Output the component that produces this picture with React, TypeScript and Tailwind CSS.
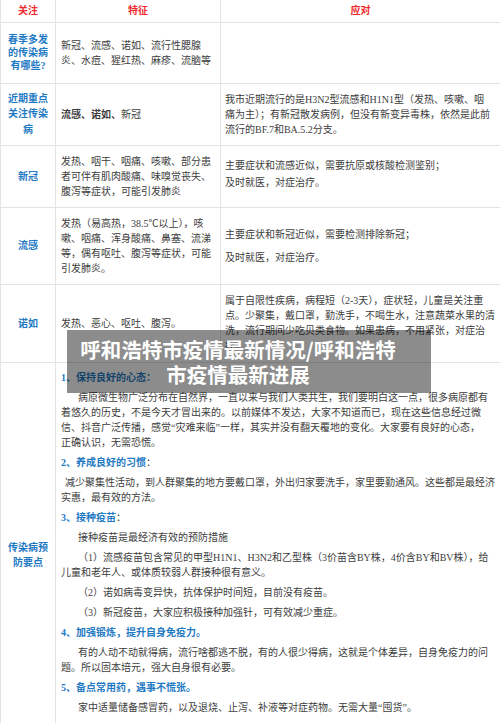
import { Fragment } from "react";

const cell = "border border-[#e4e4e4]";
const head = "border border-[#e4e4e4] text-center font-bold text-[#f02b2b]";
const left = "border border-[#e4e4e4] px-[6px] text-center font-bold text-[#1f7ac4]";
const mid = "border border-[#e4e4e4] pl-[5px] pr-[2px] text-[#3d3d3d]";
const right = "border border-[#e4e4e4] pl-[4px] pr-[2px] text-[#3d3d3d]";

// lines of the source doc are kept as-is, broken with <br />
function Lines({ lines }: { lines: string[] }) {
  return (
    <>
      {lines.map((l, i) => (
        <Fragment key={i}>
          {i > 0 && <br />}
          {l}
        </Fragment>
      ))}
    </>
  );
}

function Heading({ children, colon }: { children: string; colon?: boolean }) {
  return (
    <p className="mb-[5px] font-bold text-[#1f7ac4]">
      {children}
      {colon && <span className="font-normal text-[#333]">：</span>}
    </p>
  );
}

export default function App() {
  return (
    <div className="relative h-[723px] w-[500px] overflow-hidden bg-white font-['Liberation_Serif','Noto_Sans_CJK_SC',serif] text-[10px] leading-[15px]">
      <table className="w-[500px] table-fixed border-collapse">
        <colgroup>
          <col className="w-[55px]" />
          <col className="w-[165px]" />
          <col className="w-[280px]" />
        </colgroup>
        <tbody>
          <tr className="h-[22px]">
            <td className={head + " border-t-0"}>关注</td>
            <td className={head + " border-t-0"}>特征</td>
            <td className={head + " border-t-0"}>应对</td>
          </tr>

          <tr className="h-[61px]">
            <td className={left + " leading-[13px]"}>春季多发的传染病有哪些?</td>
            <td className={mid}>
              <Lines lines={["新冠、流感、诺如、流行性腮腺", "炎、水痘、猩红热、麻疹、流脑等"]} />
            </td>
            <td className={cell}></td>
          </tr>

          <tr className="h-[62px]">
            <td className={left + " leading-[15.5px]"}>近期重点关注传染病</td>
            <td className={mid}>
              <span className="font-bold">流感、诺如、</span>新冠
            </td>
            <td className={right}>
              <Lines
                lines={[
                  "我市近期流行的是H3N2型流感和H1N1型（发热、咳嗽、咽",
                  "痛为主）；有新冠散发病例，但没有新变异毒株，依然是此前",
                  "流行的BF.7和BA.5.2分支。",
                ]}
              />
            </td>
          </tr>

          <tr className="h-[62px]">
            <td className={left}>新冠</td>
            <td className={mid}>
              <Lines
                lines={["发热、咽干、咽痛、咳嗽、部分患", "者可伴有肌肉酸痛、味嗅觉丧失、", "腹泻等症状，可能引发肺炎"]}
              />
            </td>
            <td className={right}>
              <p>主要症状和流感近似，需要抗原或核酸检测鉴别；</p>
              <p className="mt-[2px] pb-[4px]">及时就医，对症治疗。</p>
            </td>
          </tr>

          <tr className="h-[77px]">
            <td className={left}>流感</td>
            <td className={mid}>
              <Lines
                lines={[
                  "发热（易高热，38.5℃以上），咳",
                  "嗽、咽痛、浑身酸痛、鼻塞、流涕",
                  "等，偶有呕吐、腹泻等症状，可能",
                  "引发肺炎。",
                ]}
              />
            </td>
            <td className={right}>
              <p>主要症状和新冠近似，需要检测排除新冠；</p>
              <p className="mt-[8px]">及时就医，对症治疗。</p>
            </td>
          </tr>

          <tr className="h-[78px]">
            <td className={left}>诺如</td>
            <td className={mid}>发热、恶心、呕吐、腹泻。</td>
            <td className={right}>
              <Lines
                lines={[
                  "属于自限性疾病，病程短（2-3天），症状轻，儿童是关注重",
                  "点。少聚集，戴口罩，勤洗手，不喝生水，注意蔬菜水果的清",
                  "洗，流行期间少吃贝类食物。如果患病，不用紧张，对症治",
                  "疗。",
                ]}
              />
            </td>
          </tr>

          <tr className="h-[361px]">
            <td className={left + " pt-[24px]"}>传染病预防要点</td>
            <td colSpan={2} className={cell + " pl-[5px] pr-[2px] text-[#3d3d3d]"}>
              <p className="mb-[5px] font-bold text-[#1f7ac4]">1、保持良好的心态：</p>
              <p className="mb-[5px] indent-[17px]">
                <Lines
                  lines={[
                    "病原微生物广泛分布在自然界，一直以来与我们人类共生，我们要明白这一点，很多病原都有",
                    "着悠久的历史，不是今天才冒出来的。以前媒体不发达，大家不知道而已，现在这些信息经过微",
                    "信、抖音广泛传播，感觉“灾难来临”一样，其实并没有翻天覆地的变化。大家要有良好的心态，",
                    "正确认识，无需恐慌。",
                  ]}
                />
              </p>
              <Heading colon>2、养成良好的习惯</Heading>
              <p className="mb-[5px] indent-[4px]">
                <Lines
                  lines={[
                    "减少聚集性活动，到人群聚集的地方要戴口罩，外出归家要洗手，家里要勤通风。这些都是最经济",
                    "实惠，最有效的方法。",
                  ]}
                />
              </p>
              <Heading colon>3、接种疫苗</Heading>
              <p className="mb-[5px] indent-[17px]">接种疫苗是最经济有效的预防措施</p>
              <p className="mb-[5px] indent-[17px]">
                <Lines
                  lines={[
                    "（1）流感疫苗包含常见的甲型H1N1、H3N2和乙型株（3价苗含BY株，4价含BY和BV株），给",
                    "儿童和老年人、或体质较弱人群接种很有意义。",
                  ]}
                />
              </p>
              <p className="mb-[5px] indent-[17px]">（2）诺如病毒变异快，抗体保护时间短，目前没有疫苗。</p>
              <p className="mb-[5px] indent-[17px]">（3）新冠疫苗，大家应积极接种加强针，可有效减少重症。</p>
              <Heading>4、加强锻炼，提升自身免疫力。</Heading>
              <p className="mb-[5px] indent-[17px]">
                <Lines
                  lines={[
                    "有的人动不动就得病，流行啥都逃不脱，有的人很少得病，这就是个体差异，自身免疫力的问",
                    "题。所以固本培元，强大自身很有必要。",
                  ]}
                />
              </p>
              <Heading>5、备点常用药，遇事不慌张。</Heading>
              <p className="indent-[17px]">家中适量储备感冒药，以及退烧、止泻、补液等对症药物。无需大量“囤货”。</p>
            </td>
          </tr>
        </tbody>
      </table>

      <div className="absolute left-[67px] top-[330px] flex h-[63px] w-[364px] flex-col justify-center whitespace-nowrap bg-black/45 pr-[22px] text-center font-['Noto_Sans_CJK_SC',sans-serif] text-[20.5px] font-bold leading-[25px] text-white">
        <p>呼和浩特市疫情最新情况/呼和浩特</p>
        <p>市疫情最新进展</p>
      </div>
    </div>
  );
}
